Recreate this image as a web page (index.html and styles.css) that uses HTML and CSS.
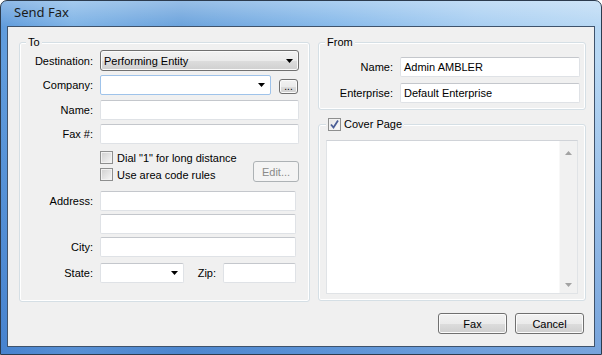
FILE: index.html
```html
<!DOCTYPE html>
<html lang="en">
<head>
    <meta charset="UTF-8">
    <title>Send Fax</title>
    <link rel="stylesheet" href="styles.css">
</head>
<body>
    <div class="window">
        <div class="titlebar">Send Fax</div>
        <div class="client">
            <div class="columns">
                <!-- To -->
                <div class="group group-to">
                    <div class="group-title">To</div>
                    <div class="row row-dest">
                        <span class="lbl">Destination:</span>
                        <div class="dropdown w-dest">
                            <span class="value">Performing Entity</span>
                            <svg class="arrow" width="7" height="4" viewBox="0 0 7 4"><polygon points="0,0 7,0 3.5,4" fill="#000"/></svg>
                        </div>
                    </div>
                    <div class="row row-company">
                        <span class="lbl">Company:</span>
                        <div class="combo combo-focus w-company">
                            <svg class="arrow" width="7" height="4" viewBox="0 0 7 4"><polygon points="0,0 7,0 3.5,4" fill="#000"/></svg>
                        </div>
                        <div class="btn btn-small">...</div>
                    </div>
                    <div class="row row-name">
                        <span class="lbl">Name:</span>
                        <div class="input w-name"></div>
                    </div>
                    <div class="row row-fax">
                        <span class="lbl">Fax #:</span>
                        <div class="input w-name"></div>
                    </div>
                    <div class="checks">
                        <div class="check-list">
                            <div class="check-line"><span class="checkbox"></span>Dial "1" for long distance</div>
                            <div class="check-line"><span class="checkbox"></span>Use area code rules</div>
                        </div>
                        <div class="btn btn-edit disabled">Edit...</div>
                    </div>
                    <div class="row row-addr">
                        <span class="lbl">Address:</span>
                        <div class="input w-addr"></div>
                    </div>
                    <div class="row row-addr2">
                        <span class="lbl"></span>
                        <div class="input w-addr"></div>
                    </div>
                    <div class="row row-city">
                        <span class="lbl">City:</span>
                        <div class="input w-addr"></div>
                    </div>
                    <div class="row row-state">
                        <span class="lbl">State:</span>
                        <div class="combo w-state">
                            <svg class="arrow" width="7" height="4" viewBox="0 0 7 4"><polygon points="0,0 7,0 3.5,4" fill="#000"/></svg>
                        </div>
                        <span class="zip-lbl">Zip:</span>
                        <div class="input w-zip"></div>
                    </div>
                </div>

                <div class="side">
                    <!-- From -->
                    <div class="group group-from">
                        <div class="group-title">From</div>
                        <div class="row row-from-name">
                            <span class="lbl lbl-from">Name:</span>
                            <div class="input w-from">Admin AMBLER</div>
                        </div>
                        <div class="row row-enterprise">
                            <span class="lbl lbl-from">Enterprise:</span>
                            <div class="input w-from">Default Enterprise</div>
                        </div>
                    </div>

                    <!-- Cover Page -->
                    <div class="group group-cover">
                        <div class="group-title title-check">
                            <span class="checkbox checked">
                                <svg width="11" height="11" viewBox="0 0 11 11"><polyline points="2,5.5 4.5,8.5 9,1.5" fill="none" stroke="#4a5d96" stroke-width="1.8"/></svg>
                            </span>
                            Cover Page
                        </div>
                        <div class="memo">
                            <div class="memo-text"></div>
                            <div class="scrollbar">
                                <div class="scroll-btn"><svg width="7" height="4" viewBox="0 0 7 4"><polygon points="0,4 7,4 3.5,0" fill="#a3a3a3"/></svg></div>
                                <div class="scroll-track"></div>
                                <div class="scroll-btn"><svg width="7" height="4" viewBox="0 0 7 4"><polygon points="0,0 7,0 3.5,4" fill="#a3a3a3"/></svg></div>
                            </div>
                        </div>
                    </div>
                </div>
            </div>

            <div class="actions">
                <div class="btn btn-action">Fax</div>
                <div class="btn btn-action">Cancel</div>
            </div>
        </div>
    </div>
</body>
</html>
```

FILE: styles.css
```css
body {
    margin: 0;
    background-color: white;
    font-family: 'Liberation Sans', Arial, sans-serif;
    font-size: 11px;
    color: black;
}
.window {
    box-sizing: border-box;
    width: 602px;
    height: 355px;
    border: 1px solid #2c3b4e;
    border-radius: 7px 7px 0 0;
    padding: 0 6px 7px 6px;
    background:
        linear-gradient(to bottom, rgba(255,255,255,0.3), rgba(255,255,255,0) 26px, rgba(40,100,190,0) 60px, rgba(40,100,190,0.45) 100%),
        linear-gradient(90deg, #5f9bdc 0%, #7eb3e6 12%, #6aa2dc 30%, #86b9ea 55%, #a9cff2 80%, #b8d8f4 100%);
}
.titlebar {
    height: 25px;
    line-height: 23px;
    padding-left: 7px;
    font-family: 'Noto Sans', sans-serif;
    font-size: 13px;
    color: #1b1b1b;
}
.client {
    box-sizing: border-box;
    height: 321px;
    border: 1px solid #3f536c;
    background-color: #f0f0f0;
    padding: 15px 8px 0 11px;
}
.columns {
    display: flex;
    gap: 8px;
    align-items: flex-start;
}
.group {
    box-sizing: border-box;
    border: 1px solid #d5dfe5;
    border-radius: 3px;
    box-shadow: inset 0 0 0 1px #fff;
}
.group-title {
    width: fit-content;
    height: 13px;
    line-height: 13px;
    margin: -7px 0 0 6px;
    padding: 0 2px;
    background-color: #f0f0f0;
}
.group-to {
    width: 291px;
    padding-bottom: 18px;
}
.side {
    width: 268px;
}
.group-from {
    padding-bottom: 6px;
}
.group-cover {
    margin-top: 14px;
}

/* rows */
.row {
    display: flex;
    align-items: center;
}
.lbl {
    width: 73px;
    margin-right: 7px;
    text-align: right;
}
.lbl-from {
    width: 74px;
}
.row-dest { margin-top: 1px; }
.row-company { margin-top: 4px; }
.row-name { margin-top: 5px; }
.row-fax { margin-top: 4px; }
.row-addr { margin-top: 8px; }
.row-addr2, .row-city { margin-top: 3px; }
.row-state { margin-top: 6px; }
.row-from-name { margin-top: 8px; }
.row-enterprise { margin-top: 6px; }

/* controls */
.input, .combo, .dropdown {
    box-sizing: border-box;
    height: 20px;
    background-color: white;
    border: 1px solid #dfe2e6;
    border-top-color: #c4c7cc;
    border-radius: 2px;
}
.input {
    padding-left: 3px;
    line-height: 18px;
}
.combo, .dropdown {
    display: flex;
    align-items: center;
    justify-content: flex-end;
}
.combo-focus {
    border-color: #9fc3ea;
}
.dropdown {
    height: 21px;
    justify-content: space-between;
    border: 1px solid #707070;
    border-radius: 3px;
    padding-left: 3px;
    background: linear-gradient(#f2f2f2, #ebebeb 50%, #dddddd 51%, #cfcfcf);
    box-shadow: inset 0 0 0 1px #fafafa;
}
.arrow {
    margin-right: 5px;
}
.w-dest { width: 199px; }
.w-company { width: 171px; }
.w-name { width: 199px; }
.w-addr { width: 196px; }
.w-state { width: 84px; }
.w-zip { width: 73px; }
.w-from { width: 180px; }
.zip-lbl {
    width: 20px;
    margin: 0 7px 0 12px;
    text-align: right;
}

/* buttons */
.btn {
    box-sizing: border-box;
    display: flex;
    align-items: center;
    justify-content: center;
    border: 1px solid #707070;
    border-radius: 3px;
    background: linear-gradient(#f2f2f2, #ebebeb 50%, #dddddd 51%, #cfcfcf);
    box-shadow: inset 0 0 0 1px #fbfbfb;
}
.btn-small {
    width: 19px;
    height: 15px;
    margin-left: 8px;
    align-self: flex-end;
    margin-bottom: 1px;
    font-size: 10px;
    line-height: 10px;
}
.btn-edit {
    width: 46px;
    height: 21px;
    align-self: flex-end;
    margin-bottom: 1px;
}
.btn.disabled {
    border-color: #adb2b5;
    background: #f4f4f4;
    box-shadow: none;
    color: #8a8a8a;
}
.btn-action {
    width: 69px;
    height: 21px;
}
.actions {
    display: flex;
    justify-content: flex-end;
    gap: 8px;
    margin: 11px 2px 0 0;
}

/* checkboxes */
.checks {
    display: flex;
    margin: 5px 10px 0 80px;
}
.check-list {
    flex: 1;
}
.check-line {
    display: flex;
    align-items: center;
    height: 17px;
}
.checkbox {
    box-sizing: border-box;
    display: inline-flex;
    align-items: center;
    justify-content: center;
    width: 13px;
    height: 13px;
    margin-right: 4px;
    border: 1px solid #8e8f8f;
    background: linear-gradient(135deg, #cfcfcf, #f7f7f7);
    box-shadow: inset 0 0 0 1px #f2f2f2;
}
.checkbox.checked {
    background: linear-gradient(135deg, #e4e4e4, #fbfbfb);
}
.title-check {
    display: flex;
    align-items: center;
    margin-left: 7px;
}
.title-check .checkbox {
    margin-right: 3px;
}

/* memo */
.memo {
    box-sizing: border-box;
    display: flex;
    width: 252px;
    height: 154px;
    margin: 9px 7px 6px 7px;
    border: 1px solid #e0e3e6;
    border-top-color: #d0d3d8;
    background-color: white;
}
.memo-text {
    flex: 1;
}
.scrollbar {
    width: 17px;
    display: flex;
    flex-direction: column;
    background-color: #f1f1f1;
    border-left: 1px solid #f8f8f8;
}
.scroll-btn {
    height: 17px;
    display: flex;
    align-items: center;
    justify-content: center;
}
.scroll-btn:first-child {
    padding-top: 3px;
}
.scroll-track {
    flex: 1;
}
```
